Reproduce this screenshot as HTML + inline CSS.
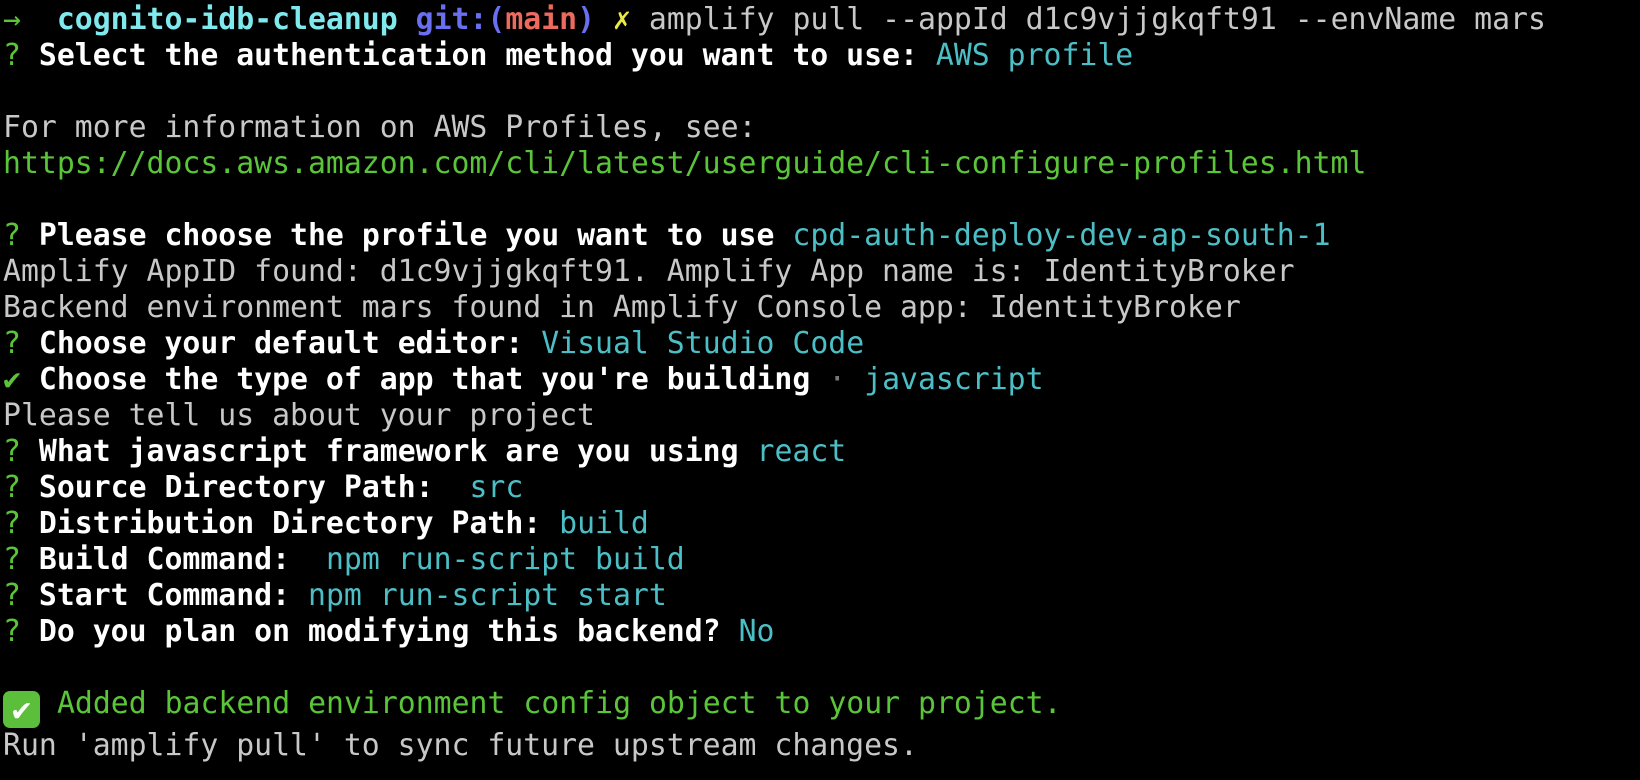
<!DOCTYPE html>
<html><head><style>
html,body{margin:0;background:#000;width:1640px;height:780px;overflow:hidden}
pre{margin:0;position:absolute;left:3px;top:2px;font-family:"DejaVu Sans Mono","Liberation Mono",monospace;font-size:29.8px;line-height:36px;color:#c8c8c8}
b{color:#fff}
.g{color:#5bc53a}.c{color:#4cbfc6}.cb{color:#7fe9ee;font-weight:bold}.bl{color:#6a6ff0;font-weight:bold}.r{color:#ec6a5e;font-weight:bold}.y{color:#e8e84a}
.ok{display:inline-block;width:37px;height:37px;background:#5cbf3c;border-radius:7px;color:#fff;text-align:center;line-height:37px;font-size:32px;vertical-align:-7px;margin-right:-1px}
</style></head><body><pre><span class="g">→</span>  <span class="cb">cognito-idb-cleanup</span> <span class="bl">git:(</span><span class="r">main</span><span class="bl">)</span> <span class="y">✗</span> amplify pull --appId d1c9vjjgkqft91 --envName mars
<span class="g">?</span> <b>Select the authentication method you want to use:</b> <span class="c">AWS profile</span>

For more information on AWS Profiles, see:
<span class="g">https://docs.aws.amazon.com/cli/latest/userguide/cli-configure-profiles.html</span>

<span class="g">?</span> <b>Please choose the profile you want to use</b> <span class="c">cpd-auth-deploy-dev-ap-south-1</span>
Amplify AppID found: d1c9vjjgkqft91. Amplify App name is: IdentityBroker
Backend environment mars found in Amplify Console app: IdentityBroker
<span class="g">?</span> <b>Choose your default editor:</b> <span class="c">Visual Studio Code</span>
<span class="g">✔</span> <b>Choose the type of app that you're building</b> <span style="color:#777">·</span> <span class="c">javascript</span>
Please tell us about your project
<span class="g">?</span> <b>What javascript framework are you using</b> <span class="c">react</span>
<span class="g">?</span> <b>Source Directory Path: </b> <span class="c">src</span>
<span class="g">?</span> <b>Distribution Directory Path:</b> <span class="c">build</span>
<span class="g">?</span> <b>Build Command: </b> <span class="c">npm run-script build</span>
<span class="g">?</span> <b>Start Command:</b> <span class="c">npm run-script start</span>
<span class="g">?</span> <b>Do you plan on modifying this backend?</b> <span class="c">No</span>

<span class="ok">✔</span> <span class="g">Added backend environment config object to your project.</span>
Run 'amplify pull' to sync future upstream changes.
</pre></body></html>
